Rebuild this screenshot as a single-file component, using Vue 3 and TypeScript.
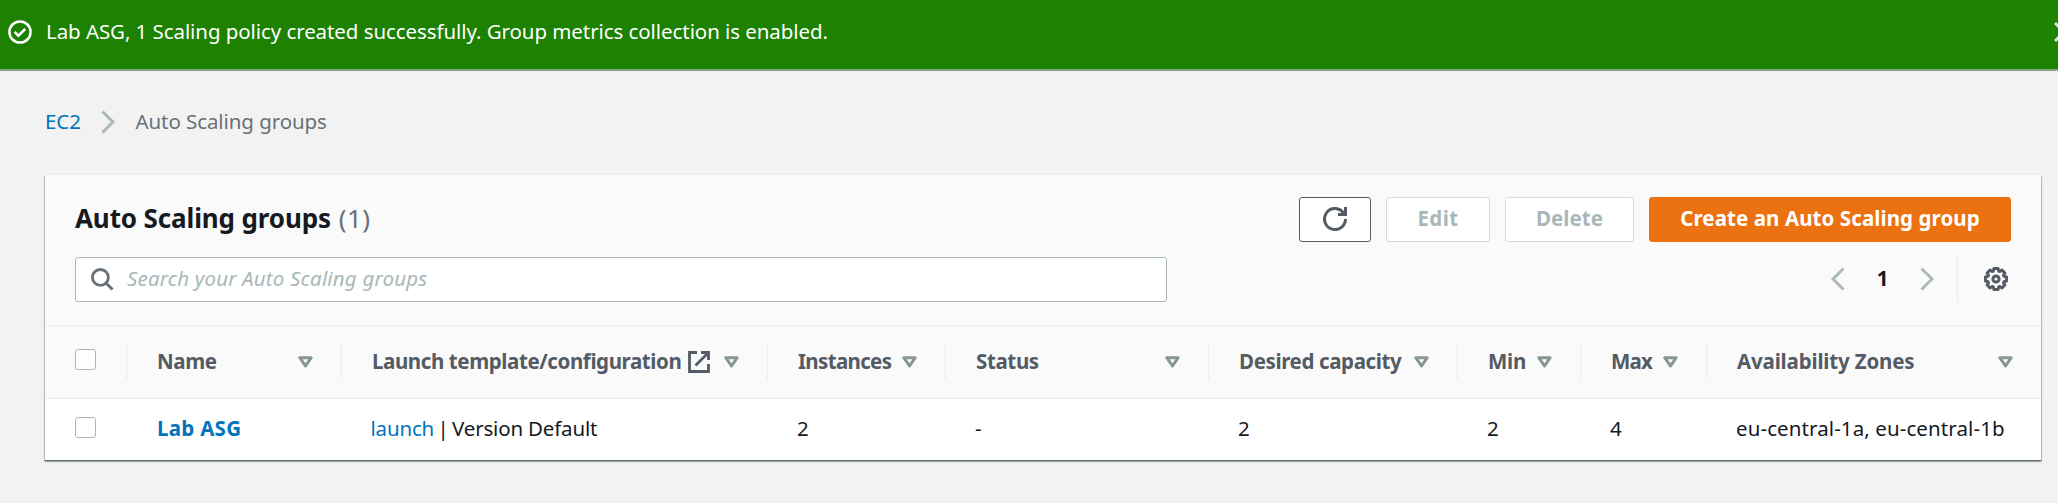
<script setup lang="ts">
interface Column {
  key: string
  label: string
  external?: boolean
}

const columns: Column[] = [
  { key: 'name', label: 'Name' },
  { key: 'launch', label: 'Launch template/configuration', external: true },
  { key: 'instances', label: 'Instances' },
  { key: 'status', label: 'Status' },
  { key: 'desired', label: 'Desired capacity' },
  { key: 'min', label: 'Min' },
  { key: 'max', label: 'Max' },
  { key: 'zones', label: 'Availability Zones' },
]

const groups = [
  {
    name: 'Lab ASG',
    template: 'launch',
    version: 'Default',
    instances: 2,
    status: '-',
    desired: 2,
    min: 2,
    max: 4,
    zones: ['eu-central-1a', 'eu-central-1b'],
  },
]
</script>

<template>
  <div class="page">
    <div class="banner" role="status">
      <svg class="banner-icon" viewBox="0 0 24 24">
        <circle cx="12" cy="12" r="10.6" />
        <path d="M6.6 12l3.8 3.7 6.8-6.7" />
      </svg>
      <p class="banner-text">Lab ASG, 1 Scaling policy created successfully. Group metrics collection is enabled.</p>
      <button class="dismiss" aria-label="Dismiss">
        <svg viewBox="0 0 20 20"><path d="M1 1l18 18M19 1L1 19" /></svg>
      </button>
    </div>

    <nav class="crumbs">
      <a class="crumb-link">EC2</a>
      <svg class="crumb-sep" viewBox="0 0 14 24"><path d="M1.5 1.5L12 12 1.5 22.5" /></svg>
      <span class="crumb-current">Auto Scaling groups</span>
    </nav>

    <section class="card">
      <header class="card-head">
        <div class="row">
          <h1 class="title">Auto Scaling groups <span class="count">({{ groups.length }})</span></h1>
          <div class="actions">
            <button class="btn refresh" aria-label="Refresh">
              <svg viewBox="0 0 24 24">
                <path d="M22.5 12A10.5 10.5 0 1 1 19.6 4.8L22.4 7.5" />
                <path d="M22.5 0V7.5H15" />
              </svg>
            </button>
            <button class="btn edit" disabled>Edit</button>
            <button class="btn delete" disabled>Delete</button>
            <button class="btn primary">Create an Auto Scaling group</button>
          </div>
        </div>
        <div class="row tools">
          <div class="search">
            <svg viewBox="0 0 24 24">
              <circle cx="9.8" cy="9.8" r="8.3" />
              <path d="M15.8 15.8l6.7 6.7" />
            </svg>
            <span class="placeholder">Search your Auto Scaling groups</span>
          </div>
          <div class="pager">
            <svg class="chev" viewBox="0 0 14 24"><path d="M12.5 1.5L2 12l10.5 10.5" /></svg>
            <span class="page-no">1</span>
            <svg class="chev" viewBox="0 0 14 24"><path d="M1.5 1.5L12 12 1.5 22.5" /></svg>
            <span class="rule"></span>
            <svg class="gear" viewBox="0 0 24 24">
              <path
                d="M9.9 1.5h4.2l.6 2.6 1 .4 2.3-1.4 2.9 2.9-1.4 2.3.4 1 2.6.6v4.2l-2.6.6-.4 1 1.4 2.3-2.9 2.9-2.3-1.4-1 .4-.6 2.6H9.9l-.6-2.6-1-.4L6 20.9 3.1 18l1.4-2.3-.4-1-2.6-.6V9.9l2.6-.6.4-1L3.1 6 6 3.1l2.3 1.4 1-.4z"
              />
              <circle cx="12" cy="12" r="3.1" />
            </svg>
          </div>
        </div>
      </header>

      <div class="grid head">
        <div class="cell check"><span class="box"></span></div>
        <div v-for="col in columns" :key="col.key" class="cell th" :class="col.key">
          <span class="label">{{ col.label }}</span>
          <svg v-if="col.external" class="external" viewBox="0 0 22 22">
            <path d="M9 1.5H1.5v19h19V13" />
            <path d="M13 1.5h7.5V9M20 2L7.5 14.5" />
          </svg>
          <svg class="sort" viewBox="0 0 15 12"><path d="M1.8 1.7h11.4L7.5 10z" /></svg>
        </div>
      </div>

      <div v-for="g in groups" :key="g.name" class="grid body">
        <div class="cell check"><span class="box"></span></div>
        <div class="cell td name"><a>{{ g.name }}</a></div>
        <div class="cell td launch"><a>{{ g.template }}</a><span class="bar">|</span>Version {{ g.version }}</div>
        <div class="cell td">{{ g.instances }}</div>
        <div class="cell td">{{ g.status }}</div>
        <div class="cell td">{{ g.desired }}</div>
        <div class="cell td">{{ g.min }}</div>
        <div class="cell td">{{ g.max }}</div>
        <div class="cell td zones">{{ g.zones.join(', ') }}</div>
      </div>
    </section>
  </div>
</template>

<style>
body {
  background: #f2f2f2;
}
</style>

<style scoped>
.page {
  height: 503px;
  overflow: hidden;
  background: #f2f2f2;
  color: #16191f;
  font: 400 20.5px/30px 'Noto Sans', 'Open Sans', sans-serif;
}
.page * {
  box-sizing: border-box;
}
svg {
  display: block;
  flex: none;
  fill: none;
  stroke: currentColor;
}

.banner {
  display: flex;
  align-items: flex-start;
  height: 71px;
  padding: 16px 0 0 8px;
  overflow: hidden;
  background: #1d8102;
  border-bottom: 2px solid #86a589;
  color: #fff;
}
.banner-icon {
  width: 24px;
  height: 24px;
  margin: 4px 14px 0 0;
  stroke-width: 2.5;
}
.banner-text {
  margin: 0;
  letter-spacing: -0.075px;
}
.dismiss {
  flex: none;
  margin: 6px -16px 0 auto;
  padding: 0;
  border: 0;
  background: none;
  color: #d5e8d1;
}
.dismiss svg {
  width: 20px;
  height: 20px;
  stroke-width: 3;
}

.crumbs {
  display: flex;
  align-items: center;
  height: 30px;
  margin: 35px 0 0 45px;
}
.crumb-link {
  width: 55.5px;
  color: #0073bb;
  letter-spacing: -0.1px;
}
.crumb-sep {
  width: 14px;
  height: 24px;
  margin: 1px 21px 0 0;
  color: #aab7b8;
  stroke-width: 3;
}
.crumb-current {
  color: #687078;
  letter-spacing: -0.08px;
}

.card {
  width: 1996px;
  height: 285px;
  margin: 39px 0 0 45px;
  background: #fff;
  box-shadow:
    0 2px 1px 0 rgba(0, 28, 36, 0.3),
    0 1px 0 0 #879596,
    1px 1px 1px 0 rgba(0, 28, 36, 0.22),
    -1px 1px 1px 0 rgba(0, 28, 36, 0.22),
    0 -1px 0 0 #eaeded;
}
.card-head {
  height: 151px;
  padding: 22px 30px 0;
  background: #fafafa;
  border-bottom: 1px solid #eaeded;
}
.row {
  display: flex;
  justify-content: space-between;
}
.tools {
  margin-top: 15px;
}
.title {
  margin: 0;
  font-size: 26px;
  font-weight: 700;
  line-height: 42px;
  letter-spacing: -0.12px;
}
.count {
  margin-left: 1px;
  color: #687078;
  font-weight: 400;
  letter-spacing: 0.5px;
}
.actions {
  display: flex;
  gap: 15px;
}
.btn {
  display: flex;
  align-items: center;
  justify-content: center;
  height: 45px;
  padding: 0 0 3px;
  border: 1px solid #d5dbdb;
  border-radius: 3px;
  background: #fff;
  color: #aab7b8;
  font: inherit;
  font-weight: 700;
  letter-spacing: 0.08px;
}
.refresh {
  width: 72px;
  padding: 0;
  border-color: #545b64;
  color: #545b64;
}
.refresh svg {
  width: 24px;
  height: 24px;
  margin-bottom: 1px;
  stroke-width: 3;
}
.edit {
  width: 104px;
  letter-spacing: 0.4px;
}
.delete {
  width: 129px;
}
.primary {
  width: 362px;
  border-color: #ec7211;
  background: #ec7211;
  color: #fff;
}

.search {
  display: flex;
  align-items: center;
  width: 1092px;
  height: 45px;
  padding-left: 15px;
  border: 1px solid #aab7b8;
  border-radius: 3px;
  background: #fff;
}
.search svg {
  width: 23px;
  height: 23px;
  margin: 0 13px 1px 0;
  color: #687078;
  stroke-width: 3;
}
.placeholder {
  padding-bottom: 3px;
  color: #aab7b8;
  font-style: italic;
  letter-spacing: 0.18px;
}
.pager {
  display: flex;
  align-items: center;
  height: 45px;
  margin-right: 3px;
}
.chev {
  width: 14px;
  height: 24px;
  margin-bottom: 1px;
  color: #aab7b8;
  stroke-width: 2.8;
}
.page-no {
  width: 75px;
  padding-bottom: 3px;
  font-weight: 700;
  text-align: center;
}
.rule {
  width: 1px;
  height: 45px;
  margin: 0 26px 0 23px;
  background: #eaeded;
}
.gear {
  width: 24px;
  height: 24px;
  margin-bottom: 1px;
  color: #545b64;
  stroke-width: 3;
  stroke-linejoin: round;
}

.grid {
  display: grid;
  grid-template-columns: 81px 215px 426px 178px 263px 249px 123px 126px 335px;
}
.head {
  height: 73px;
  align-items: center;
  background: #fafafa;
  border-bottom: 1px solid #eaeded;
}
.body {
  height: 61px;
  padding-top: 14px;
}
.cell {
  display: flex;
  align-items: center;
  white-space: nowrap;
}
.check {
  height: 36px;
  padding-left: 30px;
}
.head .check {
  padding-bottom: 5px;
}
.body .check {
  height: 28px;
}
.box {
  width: 21px;
  height: 21px;
  border: 1px solid #aab7b8;
  border-radius: 3px;
  background: #fff;
}
.th {
  height: 36px;
  padding: 0 28px 0 30px;
  border-left: 1px solid #eaeded;
  color: #545b64;
  font-weight: 700;
  letter-spacing: -0.37px;
}
.th .label {
  padding-bottom: 3px;
}
.th.launch {
  letter-spacing: -0.4px;
}
.th.instances {
  letter-spacing: -0.65px;
}
.th.min {
  letter-spacing: -0.25px;
}
.th.max {
  letter-spacing: -0.8px;
}
.th.zones {
  letter-spacing: -0.17px;
}
.sort {
  width: 15px;
  height: 12px;
  margin-left: auto;
  color: #879596;
  stroke-width: 3;
  stroke-linejoin: round;
}
.external {
  width: 22px;
  height: 22px;
  margin-left: 7px;
  stroke-width: 2.8;
}
.td {
  display: block;
  height: 30px;
  padding-left: 30px;
}
.td a {
  color: #0073bb;
}
.td.name {
  padding-left: 31px;
  font-weight: 700;
  letter-spacing: 0.28px;
}
.td.launch {
  padding-left: 29.5px;
  letter-spacing: -0.18px;
}
.bar {
  display: inline-block;
  width: 18px;
  text-align: center;
}
.td.zones {
  letter-spacing: 0.1px;
}
</style>
